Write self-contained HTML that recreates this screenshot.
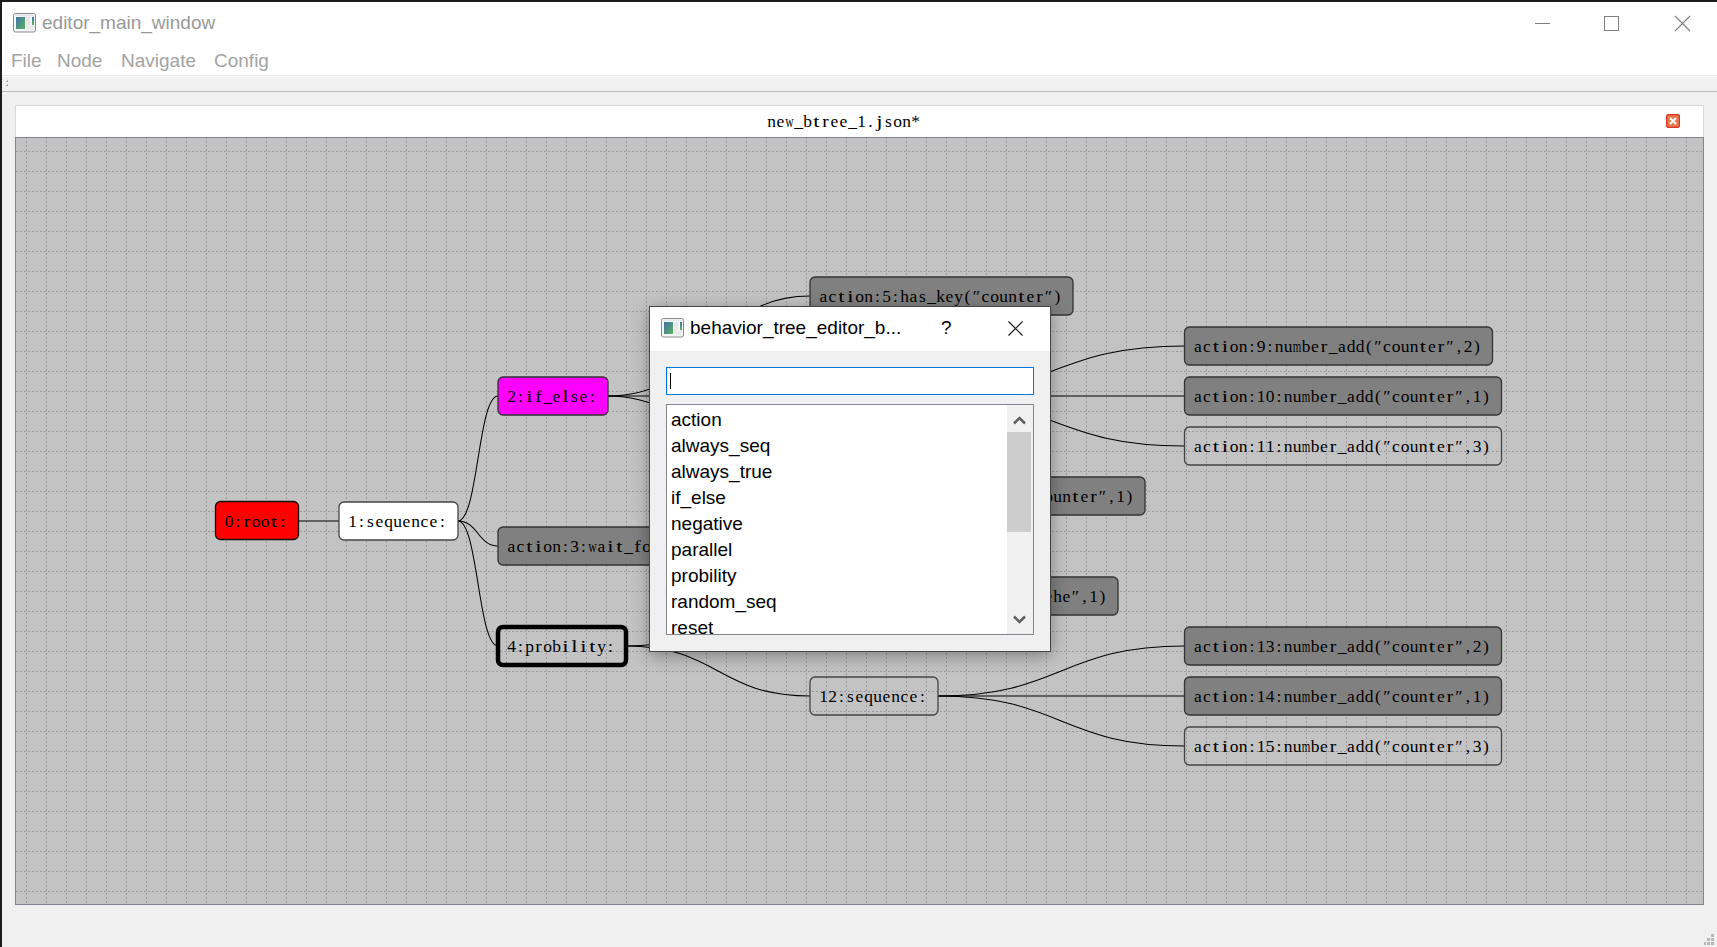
<!DOCTYPE html>
<html><head><meta charset="utf-8"><style>
html,body{margin:0;padding:0}
body{width:1717px;height:947px;overflow:hidden;position:relative;background:#f0f0f0;font-family:"Liberation Sans",sans-serif}
.abs{position:absolute}
.menu{position:absolute;top:50px;font-size:19px;color:#a3a3a3;white-space:nowrap}
.nt{font-family:"Liberation Serif",serif;font-size:17.5px;fill:#000}
.dt{position:absolute;font-size:19px;color:#000;white-space:nowrap}
.li{position:absolute;left:4px;font-size:19px;color:#000;white-space:nowrap;line-height:26px;height:26px}
</style></head><body>
<div class="abs" style="left:0;top:0;width:1717px;height:75px;background:#fff"></div>
<div class="abs" style="left:0;top:75px;width:1717px;height:1px;background:#e6e6e6"></div>
<div class="abs" style="left:0;top:91px;width:1717px;height:1px;background:#b9b9b9"></div>
<div class="abs" style="left:0;top:76px;width:1717px;height:1px;background:#fbfbfb"></div>
<div class="abs" style="left:6px;top:80px;width:2px;height:2px;background:#fff"></div>
<div class="abs" style="left:6px;top:84px;width:2px;height:2px;background:#fff"></div>
<div class="abs" style="left:6px;top:80px;width:1px;height:1px;background:#fff"></div>
<div class="abs" style="left:7px;top:80px;width:1px;height:1px;background:#b4b4b4"></div>
<div class="abs" style="left:6px;top:81px;width:2px;height:1px;background:#a8a8a8"></div>
<div class="abs" style="left:7px;top:84px;width:1px;height:1px;background:#b4b4b4"></div>
<div class="abs" style="left:6px;top:85px;width:2px;height:1px;background:#a8a8a8"></div>
<svg style="position:absolute;left:13px;top:13px" width="24" height="20" viewBox="0 0 24 20">
<defs><linearGradient id="ig13" x1="0" y1="0" x2="1" y2="1"><stop offset="0" stop-color="#3f6fae"/><stop offset="1" stop-color="#5cb55a"/></linearGradient>
<linearGradient id="ih13" x1="0" y1="0" x2="0" y2="1"><stop offset="0" stop-color="#3f6fae"/><stop offset="1" stop-color="#5cb55a"/></linearGradient></defs>
<rect x="0.5" y="0.5" width="22" height="18.5" rx="2" fill="#f4f6f9" stroke="#8a8a8a" stroke-width="1"/>
<rect x="1.5" y="1.5" width="20" height="1.5" fill="#e3e6ea"/>
<rect x="3" y="4" width="9" height="12" fill="url(#ig13)"/>
<rect x="13" y="4" width="4" height="8" fill="#e6e6e6"/>
<rect x="13" y="12.5" width="8" height="4" fill="#e9e9e9"/>
<rect x="19" y="4" width="2" height="8" fill="url(#ih13)"/>
</svg>
<div class="abs" style="left:42px;top:12px;font-size:19px;color:#999;white-space:nowrap">editor_main_window</div>
<div class="abs" style="left:1535px;top:23px;width:15px;height:1px;background:#808080"></div>
<div class="abs" style="left:1604px;top:16px;width:13px;height:13px;border:1px solid #808080"></div>
<svg class="abs" style="left:1674px;top:15px" width="17" height="17" viewBox="0 0 17 17"><path d="M1,1 L16,16 M16,1 L1,16" stroke="#808080" stroke-width="1.1" fill="none"/></svg>
<div class="menu" style="left:11px">File</div>
<div class="menu" style="left:57px">Node</div>
<div class="menu" style="left:121px">Navigate</div>
<div class="menu" style="left:214px">Config</div>
<!-- tab -->
<div class="abs" style="left:15px;top:105px;width:1687px;height:32px;background:#fff;border:1px solid #d9d9d9;border-bottom:none"></div>
<svg class="abs" style="left:0;top:100px" width="1717" height="40"><text class="nt" text-anchor="middle" x="771.5 780.5 798.5 807.5 834.5 843.5 852.5 861.5 870.5 888.5 897.5 906.5 915.5" y="26.5">ne_bee_1.son*</text><text class="nt" text-anchor="middle" transform="translate(789.50,26.5) scale(0.673,1)">w</text><text class="nt" text-anchor="middle" transform="translate(816.50,26.5) scale(1.300,1)">t</text><text class="nt" text-anchor="middle" transform="translate(825.50,26.5) scale(1.120,1)">r</text><text class="nt" text-anchor="middle" transform="translate(879.50,26.5) scale(1.300,1)">j</text></svg>
<div class="abs" style="left:1666px;top:114px;width:12px;height:12px;border:1px solid #df3524;border-radius:2px;background:#e8784a;box-shadow:inset 0 0 0 1px #e0634a"></div>
<svg class="abs" style="left:1668px;top:116px" width="10" height="10" viewBox="0 0 10 10"><path d="M2,2 L8,8 M8,2 L2,8" stroke="#fff" stroke-width="2" fill="none"/></svg>
<svg style="position:absolute;left:0;top:0" width="1717" height="947" viewBox="0 0 1717 947">
<defs>
<pattern id="grid" patternUnits="userSpaceOnUse" x="0" y="0" width="20" height="20">
<g fill="#9a9aa0" shape-rendering="crispEdges">
<rect x="6" y="1" width="1" height="2"/><rect x="6" y="5" width="1" height="2"/><rect x="6" y="9" width="1" height="2"/><rect x="6" y="13" width="1" height="2"/><rect x="6" y="17" width="1" height="2"/>
<rect x="0" y="11" width="2" height="1"/><rect x="4" y="11" width="2" height="1"/><rect x="8" y="11" width="2" height="1"/><rect x="12" y="11" width="2" height="1"/><rect x="16" y="11" width="2" height="1"/>
</g></pattern>
<clipPath id="vclip"><rect x="16" y="138" width="1687" height="766"/></clipPath>
</defs>
<rect x="16" y="138" width="1687" height="766" fill="#c3c3c3"/>
<rect x="16" y="138" width="1687" height="766" fill="url(#grid)"/>
<g clip-path="url(#vclip)">
<g fill="none" stroke="#000" stroke-width="1.05">
<path d="M298.5,521 C318.75,521 318.75,521 339,521"/>
<path d="M458,521 C478.0,521 478.0,396 498,396"/>
<path d="M458,521 C478.0,521 478.0,546 498,546"/>
<path d="M458,521 C478.0,521 478.0,646 498,646"/>
<path d="M608,396 C709.0,396 709.0,296 810,296"/>
<path d="M608,396 C709.0,396 709.0,396 810,396"/>
<path d="M608,396 C709.0,396 709.0,496 810,496"/>
<path d="M626,646 C718.0,646 718.0,596 810,596"/>
<path d="M626,646 C718.0,646 718.0,696 810,696"/>
<path d="M920,396 C1052.25,396 1052.25,346 1184.5,346"/>
<path d="M920,396 C1052.25,396 1052.25,396 1184.5,396"/>
<path d="M920,396 C1052.25,396 1052.25,446 1184.5,446"/>
<path d="M938,696 C1061.25,696 1061.25,646 1184.5,646"/>
<path d="M938,696 C1061.25,696 1061.25,696 1184.5,696"/>
<path d="M938,696 C1061.25,696 1061.25,746 1184.5,746"/>
</g>
<rect x="215.5" y="501.5" width="83" height="38" rx="5" ry="5" fill="#ff0000" stroke="#111" stroke-width="1.3"/>
<text class="nt" text-anchor="middle" x="229.0 238.0 256.0 265.0 283.0" y="526.5">0:oo:</text><text class="nt" text-anchor="middle" transform="translate(247.00,526.5) scale(1.120,1)">r</text><text class="nt" text-anchor="middle" transform="translate(274.00,526.5) scale(1.300,1)">t</text>
<rect x="339" y="502.0" width="119" height="38" rx="5" ry="5" fill="#ffffff" stroke="#444" stroke-width="1.3"/>
<text class="nt" text-anchor="middle" x="352.5 361.5 370.5 379.5 388.5 397.5 406.5 415.5 424.5 433.5 442.5" y="527">1:sequence:</text>
<rect x="498" y="377.0" width="110" height="38" rx="5" ry="5" fill="#ff00ff" stroke="#333" stroke-width="1.3"/>
<text class="nt" text-anchor="middle" x="511.5 520.5 547.5 556.5 574.5 583.5 592.5" y="402">2:_ese:</text><text class="nt" text-anchor="middle" transform="translate(529.50,402) scale(1.300,1)">i</text><text class="nt" text-anchor="middle" transform="translate(538.50,402) scale(1.120,1)">f</text><text class="nt" text-anchor="middle" transform="translate(565.50,402) scale(1.300,1)">l</text>
<rect x="498" y="527.0" width="200" height="38" rx="5" ry="5" fill="#808080" stroke="#333" stroke-width="1.3"/>
<text class="nt" text-anchor="middle" x="511.5 520.5 547.5 556.5 565.5 574.5 583.5 601.5 628.5 646.5 664.5 673.5 682.5" y="552">acon:3:a_o(1)</text><text class="nt" text-anchor="middle" transform="translate(529.50,552) scale(1.300,1)">t</text><text class="nt" text-anchor="middle" transform="translate(538.50,552) scale(1.300,1)">i</text><text class="nt" text-anchor="middle" transform="translate(592.50,552) scale(0.673,1)">w</text><text class="nt" text-anchor="middle" transform="translate(610.50,552) scale(1.300,1)">i</text><text class="nt" text-anchor="middle" transform="translate(619.50,552) scale(1.300,1)">t</text><text class="nt" text-anchor="middle" transform="translate(637.50,552) scale(1.120,1)">f</text><text class="nt" text-anchor="middle" transform="translate(655.50,552) scale(1.120,1)">r</text>
<rect x="498" y="627.0" width="128" height="38" rx="5" ry="5" fill="none" stroke="#000" stroke-width="4.5"/>
<text class="nt" text-anchor="middle" x="511.5 520.5 529.5 547.5 556.5 601.5 610.5" y="652">4:poby:</text><text class="nt" text-anchor="middle" transform="translate(538.50,652) scale(1.120,1)">r</text><text class="nt" text-anchor="middle" transform="translate(565.50,652) scale(1.300,1)">i</text><text class="nt" text-anchor="middle" transform="translate(574.50,652) scale(1.300,1)">l</text><text class="nt" text-anchor="middle" transform="translate(583.50,652) scale(1.300,1)">i</text><text class="nt" text-anchor="middle" transform="translate(592.50,652) scale(1.300,1)">t</text>
<rect x="810" y="277.0" width="263" height="38" rx="5" ry="5" fill="#808080" stroke="#333" stroke-width="1.3"/>
<text class="nt" text-anchor="middle" x="823.5 832.5 859.5 868.5 877.5 886.5 895.5 904.5 913.5 922.5 931.5 940.5 949.5 958.5 967.5 976.5 985.5 994.5 1003.5 1012.5 1030.5 1048.5 1057.5" y="302">acon:5:has_key(″coune″)</text><text class="nt" text-anchor="middle" transform="translate(841.50,302) scale(1.300,1)">t</text><text class="nt" text-anchor="middle" transform="translate(850.50,302) scale(1.300,1)">i</text><text class="nt" text-anchor="middle" transform="translate(1021.50,302) scale(1.300,1)">t</text><text class="nt" text-anchor="middle" transform="translate(1039.50,302) scale(1.120,1)">r</text>
<rect x="810" y="377.0" width="119" height="38" rx="5" ry="5" fill="none" stroke="#333" stroke-width="1.3"/>
<text class="nt" text-anchor="middle" x="823.5 832.5 841.5 850.5 859.5 868.5 877.5 886.5 895.5 904.5 913.5" y="402">6:sequence:</text>
<rect x="810" y="477.0" width="335" height="38" rx="5" ry="5" fill="#808080" stroke="#333" stroke-width="1.3"/>
<text class="nt" text-anchor="middle" x="823.5 832.5 859.5 868.5 877.5 886.5 895.5 904.5 913.5 931.5 940.5 958.5 967.5 985.5 1003.5 1012.5 1021.5 1030.5 1039.5 1048.5 1057.5 1066.5 1084.5 1102.5 1111.5 1120.5 1129.5" y="502">acon:7:nube_dvde(″coune″,1)</text><text class="nt" text-anchor="middle" transform="translate(841.50,502) scale(1.300,1)">t</text><text class="nt" text-anchor="middle" transform="translate(850.50,502) scale(1.300,1)">i</text><text class="nt" text-anchor="middle" transform="translate(922.50,502) scale(0.624,1)">m</text><text class="nt" text-anchor="middle" transform="translate(949.50,502) scale(1.120,1)">r</text><text class="nt" text-anchor="middle" transform="translate(976.50,502) scale(1.300,1)">i</text><text class="nt" text-anchor="middle" transform="translate(994.50,502) scale(1.300,1)">i</text><text class="nt" text-anchor="middle" transform="translate(1075.50,502) scale(1.300,1)">t</text><text class="nt" text-anchor="middle" transform="translate(1093.50,502) scale(1.120,1)">r</text>
<rect x="810" y="577.0" width="308" height="38" rx="5" ry="5" fill="#808080" stroke="#333" stroke-width="1.3"/>
<text class="nt" text-anchor="middle" x="823.5 832.5 859.5 868.5 877.5 886.5 895.5 904.5 913.5 931.5 940.5 958.5 967.5 976.5 985.5 994.5 1003.5 1012.5 1021.5 1030.5 1039.5 1048.5 1057.5 1066.5 1075.5 1084.5 1093.5 1102.5" y="602">acon:8:nube_add(″hhhhehe″,1)</text><text class="nt" text-anchor="middle" transform="translate(841.50,602) scale(1.300,1)">t</text><text class="nt" text-anchor="middle" transform="translate(850.50,602) scale(1.300,1)">i</text><text class="nt" text-anchor="middle" transform="translate(922.50,602) scale(0.624,1)">m</text><text class="nt" text-anchor="middle" transform="translate(949.50,602) scale(1.120,1)">r</text>
<rect x="810" y="677.0" width="128" height="38" rx="5" ry="5" fill="none" stroke="#444" stroke-width="1.3"/>
<text class="nt" text-anchor="middle" x="823.5 832.5 841.5 850.5 859.5 868.5 877.5 886.5 895.5 904.5 913.5 922.5" y="702">12:sequence:</text>
<rect x="1184.5" y="327.0" width="308" height="38" rx="5" ry="5" fill="#808080" stroke="#333" stroke-width="1.3"/>
<text class="nt" text-anchor="middle" x="1198.0 1207.0 1234.0 1243.0 1252.0 1261.0 1270.0 1279.0 1288.0 1306.0 1315.0 1333.0 1342.0 1351.0 1360.0 1369.0 1378.0 1387.0 1396.0 1405.0 1414.0 1432.0 1450.0 1459.0 1468.0 1477.0" y="352">acon:9:nube_add(″coune″,2)</text><text class="nt" text-anchor="middle" transform="translate(1216.00,352) scale(1.300,1)">t</text><text class="nt" text-anchor="middle" transform="translate(1225.00,352) scale(1.300,1)">i</text><text class="nt" text-anchor="middle" transform="translate(1297.00,352) scale(0.624,1)">m</text><text class="nt" text-anchor="middle" transform="translate(1324.00,352) scale(1.120,1)">r</text><text class="nt" text-anchor="middle" transform="translate(1423.00,352) scale(1.300,1)">t</text><text class="nt" text-anchor="middle" transform="translate(1441.00,352) scale(1.120,1)">r</text>
<rect x="1184.5" y="377.0" width="317" height="38" rx="5" ry="5" fill="#808080" stroke="#333" stroke-width="1.3"/>
<text class="nt" text-anchor="middle" x="1198.0 1207.0 1234.0 1243.0 1252.0 1261.0 1270.0 1279.0 1288.0 1297.0 1315.0 1324.0 1342.0 1351.0 1360.0 1369.0 1378.0 1387.0 1396.0 1405.0 1414.0 1423.0 1441.0 1459.0 1468.0 1477.0 1486.0" y="402">acon:10:nube_add(″coune″,1)</text><text class="nt" text-anchor="middle" transform="translate(1216.00,402) scale(1.300,1)">t</text><text class="nt" text-anchor="middle" transform="translate(1225.00,402) scale(1.300,1)">i</text><text class="nt" text-anchor="middle" transform="translate(1306.00,402) scale(0.624,1)">m</text><text class="nt" text-anchor="middle" transform="translate(1333.00,402) scale(1.120,1)">r</text><text class="nt" text-anchor="middle" transform="translate(1432.00,402) scale(1.300,1)">t</text><text class="nt" text-anchor="middle" transform="translate(1450.00,402) scale(1.120,1)">r</text>
<rect x="1184.5" y="427.0" width="317" height="38" rx="5" ry="5" fill="none" stroke="#444" stroke-width="1.3"/>
<text class="nt" text-anchor="middle" x="1198.0 1207.0 1234.0 1243.0 1252.0 1261.0 1270.0 1279.0 1288.0 1297.0 1315.0 1324.0 1342.0 1351.0 1360.0 1369.0 1378.0 1387.0 1396.0 1405.0 1414.0 1423.0 1441.0 1459.0 1468.0 1477.0 1486.0" y="452">acon:11:nube_add(″coune″,3)</text><text class="nt" text-anchor="middle" transform="translate(1216.00,452) scale(1.300,1)">t</text><text class="nt" text-anchor="middle" transform="translate(1225.00,452) scale(1.300,1)">i</text><text class="nt" text-anchor="middle" transform="translate(1306.00,452) scale(0.624,1)">m</text><text class="nt" text-anchor="middle" transform="translate(1333.00,452) scale(1.120,1)">r</text><text class="nt" text-anchor="middle" transform="translate(1432.00,452) scale(1.300,1)">t</text><text class="nt" text-anchor="middle" transform="translate(1450.00,452) scale(1.120,1)">r</text>
<rect x="1184.5" y="627.0" width="317" height="38" rx="5" ry="5" fill="#808080" stroke="#333" stroke-width="1.3"/>
<text class="nt" text-anchor="middle" x="1198.0 1207.0 1234.0 1243.0 1252.0 1261.0 1270.0 1279.0 1288.0 1297.0 1315.0 1324.0 1342.0 1351.0 1360.0 1369.0 1378.0 1387.0 1396.0 1405.0 1414.0 1423.0 1441.0 1459.0 1468.0 1477.0 1486.0" y="652">acon:13:nube_add(″coune″,2)</text><text class="nt" text-anchor="middle" transform="translate(1216.00,652) scale(1.300,1)">t</text><text class="nt" text-anchor="middle" transform="translate(1225.00,652) scale(1.300,1)">i</text><text class="nt" text-anchor="middle" transform="translate(1306.00,652) scale(0.624,1)">m</text><text class="nt" text-anchor="middle" transform="translate(1333.00,652) scale(1.120,1)">r</text><text class="nt" text-anchor="middle" transform="translate(1432.00,652) scale(1.300,1)">t</text><text class="nt" text-anchor="middle" transform="translate(1450.00,652) scale(1.120,1)">r</text>
<rect x="1184.5" y="677.0" width="317" height="38" rx="5" ry="5" fill="#808080" stroke="#333" stroke-width="1.3"/>
<text class="nt" text-anchor="middle" x="1198.0 1207.0 1234.0 1243.0 1252.0 1261.0 1270.0 1279.0 1288.0 1297.0 1315.0 1324.0 1342.0 1351.0 1360.0 1369.0 1378.0 1387.0 1396.0 1405.0 1414.0 1423.0 1441.0 1459.0 1468.0 1477.0 1486.0" y="702">acon:14:nube_add(″coune″,1)</text><text class="nt" text-anchor="middle" transform="translate(1216.00,702) scale(1.300,1)">t</text><text class="nt" text-anchor="middle" transform="translate(1225.00,702) scale(1.300,1)">i</text><text class="nt" text-anchor="middle" transform="translate(1306.00,702) scale(0.624,1)">m</text><text class="nt" text-anchor="middle" transform="translate(1333.00,702) scale(1.120,1)">r</text><text class="nt" text-anchor="middle" transform="translate(1432.00,702) scale(1.300,1)">t</text><text class="nt" text-anchor="middle" transform="translate(1450.00,702) scale(1.120,1)">r</text>
<rect x="1184.5" y="727.0" width="317" height="38" rx="5" ry="5" fill="none" stroke="#444" stroke-width="1.3"/>
<text class="nt" text-anchor="middle" x="1198.0 1207.0 1234.0 1243.0 1252.0 1261.0 1270.0 1279.0 1288.0 1297.0 1315.0 1324.0 1342.0 1351.0 1360.0 1369.0 1378.0 1387.0 1396.0 1405.0 1414.0 1423.0 1441.0 1459.0 1468.0 1477.0 1486.0" y="752">acon:15:nube_add(″coune″,3)</text><text class="nt" text-anchor="middle" transform="translate(1216.00,752) scale(1.300,1)">t</text><text class="nt" text-anchor="middle" transform="translate(1225.00,752) scale(1.300,1)">i</text><text class="nt" text-anchor="middle" transform="translate(1306.00,752) scale(0.624,1)">m</text><text class="nt" text-anchor="middle" transform="translate(1333.00,752) scale(1.120,1)">r</text><text class="nt" text-anchor="middle" transform="translate(1432.00,752) scale(1.300,1)">t</text><text class="nt" text-anchor="middle" transform="translate(1450.00,752) scale(1.120,1)">r</text>
</g>
<rect x="15.5" y="137.5" width="1688" height="767" fill="none" stroke="#7f848e" stroke-width="1"/>
</svg>
<!-- size grip -->
<div class="abs" style="left:1711px;top:934px;width:3px;height:3px;background:#b8b8b8"></div>
<div class="abs" style="left:1707px;top:938px;width:3px;height:3px;background:#b8b8b8"></div>
<div class="abs" style="left:1711px;top:938px;width:3px;height:3px;background:#b8b8b8"></div>
<div class="abs" style="left:1704px;top:942px;width:2px;height:3px;background:#b8b8b8"></div>
<div class="abs" style="left:1707px;top:942px;width:3px;height:3px;background:#b8b8b8"></div>
<div class="abs" style="left:1711px;top:942px;width:3px;height:3px;background:#b8b8b8"></div>

<div id="shadow" style="position:absolute;left:649px;top:306px;width:402px;height:346px;box-shadow:0 4px 16px rgba(0,0,0,0.35)"></div>
<div id="dlg" style="position:absolute;left:649px;top:306px;width:400px;height:344px;border:1px solid #454545;background:#f0f0f0">
  <div style="position:absolute;left:0;top:0;width:400px;height:44px;background:#fff"></div>
  <svg style="position:absolute;left:11px;top:11px" width="24" height="20" viewBox="0 0 24 20">
<defs><linearGradient id="ig11" x1="0" y1="0" x2="1" y2="1"><stop offset="0" stop-color="#3f6fae"/><stop offset="1" stop-color="#5cb55a"/></linearGradient>
<linearGradient id="ih11" x1="0" y1="0" x2="0" y2="1"><stop offset="0" stop-color="#3f6fae"/><stop offset="1" stop-color="#5cb55a"/></linearGradient></defs>
<rect x="0.5" y="0.5" width="22" height="18.5" rx="2" fill="#f4f6f9" stroke="#8a8a8a" stroke-width="1"/>
<rect x="1.5" y="1.5" width="20" height="1.5" fill="#e3e6ea"/>
<rect x="3" y="4" width="9" height="12" fill="url(#ig11)"/>
<rect x="13" y="4" width="4" height="8" fill="#e6e6e6"/>
<rect x="13" y="12.5" width="8" height="4" fill="#e9e9e9"/>
<rect x="19" y="4" width="2" height="8" fill="url(#ih11)"/>
</svg>
  <div class="dt" style="left:40px;top:10px">behavior_tree_editor_b...</div>
  <div class="dt" style="left:291px;top:10px">?</div>
  <svg style="position:absolute;left:358px;top:14px" width="16" height="16" viewBox="0 0 16 16"><path d="M0.5,0.5 L14.5,14.5 M14.5,0.5 L0.5,14.5" stroke="#111" stroke-width="1.1" fill="none"/></svg>
  <div style="position:absolute;left:16px;top:60px;width:366px;height:26px;border:1px solid #0078d7;background:#fff">
    <div style="position:absolute;left:3px;top:5px;width:1px;height:16px;background:#000"></div>
  </div>
  <div style="position:absolute;left:16px;top:97px;width:366px;height:229px;border:1px solid #828790;background:#fff;overflow:hidden">
    <div class="li" style="top:2px">action</div><div class="li" style="top:28px">always_seq</div><div class="li" style="top:54px">always_true</div><div class="li" style="top:80px">if_else</div><div class="li" style="top:106px">negative</div><div class="li" style="top:132px">parallel</div><div class="li" style="top:158px">probility</div><div class="li" style="top:184px">random_seq</div><div class="li" style="top:210px">reset</div>
    <div style="position:absolute;left:340px;top:0;width:26px;height:229px;background:#f0f0f0"></div>
    <div style="position:absolute;left:340px;top:27px;width:24px;height:100px;background:#cdcdcd"></div>
    <svg style="position:absolute;left:346px;top:9px" width="13" height="12" viewBox="0 0 13 12"><path d="M1,9.5 L6.5,4 L12,9.5" stroke="#606060" stroke-width="2.6" fill="none"/></svg>
    <svg style="position:absolute;left:346px;top:209px" width="13" height="12" viewBox="0 0 13 12"><path d="M1,2.5 L6.5,8 L12,2.5" stroke="#606060" stroke-width="2.6" fill="none"/></svg>
  </div>
</div>
<div class="abs" style="left:0;top:0;width:1717px;height:2px;background:#1c1c1c"></div>
<div class="abs" style="left:0;top:0;width:2px;height:947px;background:#1c1c1c"></div>
</body></html>
